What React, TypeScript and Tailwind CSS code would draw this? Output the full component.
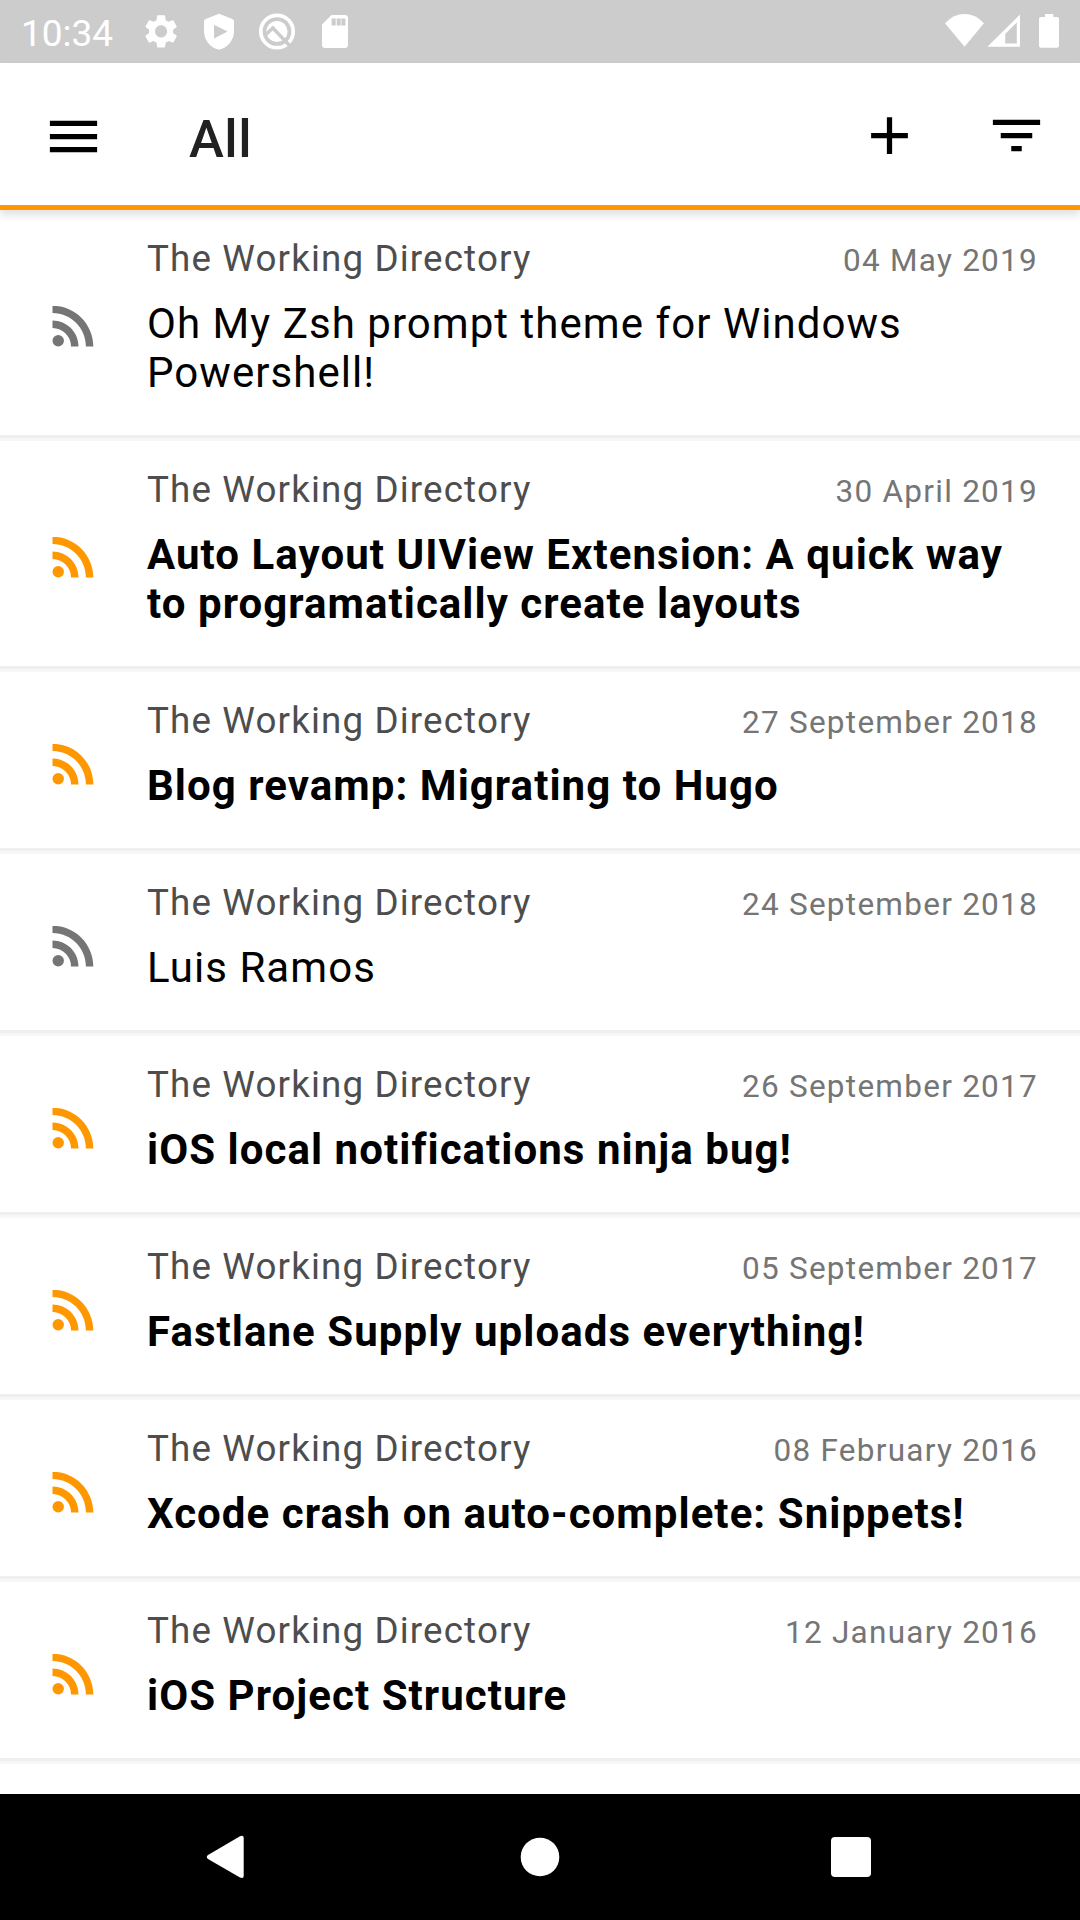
type Entry = { title: string; date: string; read?: boolean };

const entries: Entry[] = [
  { title: 'Oh My Zsh prompt theme for Windows Powershell!', date: '04 May 2019', read: true },
  { title: 'Auto Layout UIView Extension: A quick way to programatically create layouts', date: '30 April 2019' },
  { title: 'Blog revamp: Migrating to Hugo', date: '27 September 2018' },
  { title: 'Luis Ramos', date: '24 September 2018', read: true },
  { title: 'iOS local notifications ninja bug!', date: '26 September 2017' },
  { title: 'Fastlane Supply uploads everything!', date: '05 September 2017' },
  { title: 'Xcode crash on auto-complete: Snippets!', date: '08 February 2016' },
  { title: 'iOS Project Structure', date: '12 January 2016' },
];

function StatusBar() {
  return (
    <div className="flex h-[63px] shrink-0 justify-between bg-[#cccccc] pl-[21px] text-white">
      <div className="flex">
        <span className="w-[119px] pt-[2px] text-[37px] leading-[63px]">10:34</span>
        <svg width="220" height="63" viewBox="140 0 220 63" fill="#fff">
          <path
            transform="translate(141 11.3) scale(1.675)"
            d="M19.14 12.94c.04-.3.06-.61.06-.94 0-.32-.02-.64-.07-.94l2.03-1.58c.18-.14.23-.41.12-.61l-1.92-3.32c-.12-.22-.37-.29-.59-.22l-2.39.96c-.5-.38-1.03-.7-1.62-.94l-.36-2.54c-.04-.24-.24-.41-.48-.41h-3.84c-.24 0-.43.17-.47.41l-.36 2.54c-.59.24-1.13.57-1.62.94l-2.39-.96c-.22-.08-.47 0-.59.22L2.74 8.87c-.12.21-.08.47.12.61l2.03 1.58c-.05.3-.09.63-.09.94s.02.64.07.94l-2.03 1.58c-.18.14-.23.41-.12.61l1.92 3.32c.12.22.37.29.59.22l2.39-.96c.5.38 1.03.7 1.62.94l.36 2.54c.05.24.24.41.48.41h3.84c.24 0 .44-.17.47-.41l.36-2.54c.59-.24 1.13-.56 1.62-.94l2.39.96c.22.08.47 0 .59-.22l1.92-3.32c.12-.22.07-.47-.12-.61l-2.01-1.58zM12 15.6c-1.98 0-3.6-1.62-3.6-3.6s1.62-3.6 3.6-3.6 3.6 1.62 3.6 3.6-1.62 3.6-3.6 3.6z"
          />
          <path d="M219 13.8 L232.3 19 Q234 19.8 234 21.5 V31 C234 40 228 47.5 219 49.8 C210 47.5 204 40 204 31 V21.5 Q204 19.8 205.7 19 Z" />
          <path d="M214 24.8 V38.4 L227.6 31.6 Z" fill="#cccccc" />
          <circle cx="277" cy="31.5" r="16.2" fill="none" stroke="#fff" strokeWidth="3.7" />
          <circle cx="277" cy="31.5" r="10.6" />
          <path d="M265.5 35 L272.8 28 L291 47" fill="none" stroke="#cccccc" strokeWidth="3.4" />
          <path d="M331.5 15 H345 Q348 15 348 18 V45 Q348 48 345 48 H325 Q322 48 322 45 V24.5 Z" />
          <path d="M331.7 18.5 h4 v7 h-4z M336.7 18.5 h4 v7 h-4z M341.4 18.5 h4 v7 h-4z" fill="#cccccc" />
        </svg>
      </div>
      <svg width="140" height="63" viewBox="940 0 140 63" fill="#fff">
        <path d="M945 23.3 Q953.5 14 964.5 14 Q975.5 14 984 23.3 L964.5 46.7 Z" />
        <path fillRule="evenodd" d="M987.4 46.8 L1020 14.4 V46.8 Z M1005.2 34 V43.6 H1016.8 V22.6 Z" />
        <path d="M1045 14 H1053.3 V17 H1057 Q1059 17 1059 19 V45.7 Q1059 47.7 1057 47.7 H1041 Q1039 47.7 1039 45.7 V19 Q1039 17 1041 17 H1045 Z" />
      </svg>
    </div>
  );
}

function Toolbar() {
  return (
    <header className="relative z-10 flex h-[147px] shrink-0 items-center border-b-[5px] border-[#ff9800] bg-white pl-[42px] pr-8 shadow-[0_5px_8px_rgba(0,0,0,0.12)]">
      <svg className="mt-[5px] size-[63px]" viewBox="0 0 24 24">
        <path d="M3 18h18v-2H3v2zm0-5h18v-2H3v2zm0-7v2h18V6H3z" />
      </svg>
      <h1 className="ml-[84px] mt-[9px] flex-1 text-[52.5px] font-medium leading-[62px] tracking-[0.01em] text-[#212121]">All</h1>
      <svg className="mt-[3px] size-[63px]" viewBox="0 0 24 24">
        <path d="M19 13h-6v6h-2v-6H5v-2h6V5h2v6h6v2z" />
      </svg>
      <svg className="ml-16 mt-[3px] size-[63px]" viewBox="0 0 24 24">
        <path d="M10 18h4v-2h-4v2zM3 6v2h18V6H3zm3 7h12v-2H6v2z" />
      </svg>
    </header>
  );
}

function Row({ title, date, read }: Entry) {
  return (
    <li className="flex items-center border-b-[3px] border-[#f7f7f7] pl-[42px] pr-[42px] shadow-[inset_0_-3px_0_#efefef]">
      <svg
        className={read ? 'mt-[3px] size-[63px] shrink-0 fill-[#757575]' : 'mt-[3px] size-[63px] shrink-0 fill-[#ff9800]'}
        viewBox="0 0 24 24"
      >
        <circle cx="6.18" cy="17.82" r="2.18" />
        <path d="M4 4.44v2.83c7.03 0 12.73 5.7 12.73 12.73h2.83c0-8.59-6.97-15.56-15.56-15.56zm0 5.66v2.83c3.9 0 7.07 3.17 7.07 7.07h2.83c0-5.47-4.43-9.9-9.9-9.9z" />
      </svg>
      <div className="ml-[42px] flex-1 pb-[41px] pt-[27px]">
        <div className="flex items-baseline justify-between">
          <span className="text-[36.75px] leading-[44px] tracking-[0.031em] text-[#4d4d4d]">The Working Directory</span>
          <span className="text-[31.5px] leading-[37px] tracking-[0.04em] text-[#757575]">{date}</span>
        </div>
        <p className={read ? 'mt-[18px] w-[880px] text-[42px] leading-[49px] tracking-[0.025em] text-black' : 'mt-[18px] w-[880px] text-[42px] font-bold leading-[49px] tracking-[0.025em] text-black'}>
          {title}
        </p>
      </div>
    </li>
  );
}

function NavBar() {
  return (
    <nav className="flex h-[126px] shrink-0 items-center bg-black">
      <svg width="1080" height="126" viewBox="0 1794 1080 126" fill="#fff">
        <path d="M240 1836.2 Q243.7 1834.8 243.7 1838 V1876 Q243.7 1879 240 1877.6 L208 1859 Q205.5 1857 208 1855 Z" />
        <circle cx="540" cy="1857" r="19.3" />
        <rect x="831" y="1837" width="40" height="40" rx="4" />
      </svg>
    </nav>
  );
}

export default function App() {
  return (
    <div className="flex h-[1920px] w-[1080px] flex-col overflow-hidden bg-white font-['Roboto',sans-serif]">
      <StatusBar />
      <Toolbar />
      <ul className="flex-1 overflow-hidden">
        {entries.map((e) => (
          <Row key={e.title} {...e} />
        ))}
      </ul>
      <NavBar />
    </div>
  );
}
